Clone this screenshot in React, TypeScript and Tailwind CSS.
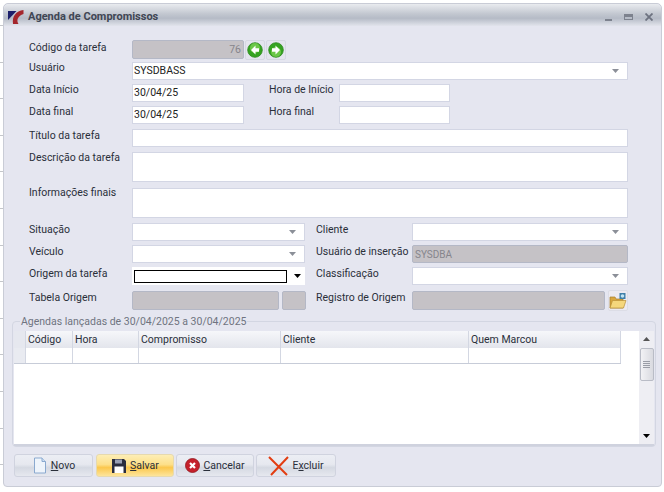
import React from 'react';

const Label = ({ children, className = '' }: { children: React.ReactNode; className?: string }) => (
  <span className={`text-[10.5px] leading-[14px] text-[#2a2f3a] whitespace-nowrap ${className}`}>{children}</span>
);

const Caret = ({ dark = false }: { dark?: boolean }) => (
  <svg width="7" height="4" viewBox="0 0 7 4" className="shrink-0">
    <path d="M0 0H7L3.500 4Z" fill={dark ? '#000' : '#8b8f98'} />
  </svg>
);

const Input = ({ value, className = '' }: { value?: string; className?: string }) => (
  <div className={`h-[18px] bg-white border border-[#d3d6e4] pl-[1px] text-[10.5px] leading-[18px] text-[#222] flex items-center ${className}`}>
    {value}
  </div>
);

const Select = ({ value, className = '' }: { value?: string; className?: string }) => (
  <div className={`h-[18px] bg-white border border-[#d3d6e4] pl-[1px] pr-2 text-[10.5px] text-[#222] flex items-center justify-between ${className}`}>
    <span>{value}</span>
    <Caret />
  </div>
);

const Disabled = ({ children, className = '' }: { children?: React.ReactNode; className?: string }) => (
  <div className={`h-[18px] bg-[#c5c2c6] border border-[#b4b8c6] rounded-[2px] text-[10.5px] text-[#85858c] flex items-center ${className}`}>
    {children}
  </div>
);

const ArrowButton = ({ flip = false }: { flip?: boolean }) => (
  <div className="w-[20px] h-[20px] bg-[#e4e5ee] border border-[#d6d8e3] rounded-[2px] flex items-center justify-center">
    <svg width="16" height="16" viewBox="0 0 16 16" className={flip ? 'rotate-180' : ''}>
      <circle cx="8" cy="8" r="7.300" fill="#35a321" stroke="#2e8a20" strokeWidth="0.800" />
      <circle cx="8" cy="6" r="5" fill="#8fe060" opacity="0.600" />
      <path d="M8.500 3.500L4 8L8.500 12.500V9.800H12V6.200H8.500Z" fill="#fff" />
    </svg>
  </div>
);

const Logo = () => (
  <svg width="16" height="16" viewBox="0 0 16 16" className="shrink-0">
    <path d="M0 2H8.500L0 11Z" fill="#1c1f6b" />
    <path d="M15.500 1C8 2 4 7 5 15H10.500C8 11 10 7 15.500 5Z" fill="#a4262c" />
  </svg>
);

const Folder = () => (
  <svg width="18" height="18" viewBox="0 0 18 18">
    <path d="M1 5H6L7 7H14V16H1Z" fill="#d9a63c" stroke="#a87f2b" strokeWidth="0.700" />
    <path d="M1 16L3.500 8.500H17L14.500 16Z" fill="#f5d77c" stroke="#b98f37" strokeWidth="0.700" />
    <rect x="10.500" y="1" width="6" height="6" fill="#3f7fa8" />
    <circle cx="13.500" cy="4" r="1.800" fill="#bfe3f2" />
  </svg>
);

const ActionButton = ({ icon, text, hot, active = false, width }: { icon: React.ReactNode; text: string; hot: number; active?: boolean; width: string }) => (
  <div className={`${width} h-[23px] rounded-[3px] border flex items-center justify-center gap-[3px] text-[10.5px] text-[#2a2f3a] ${active ? 'border-[#e6d9ae] bg-[linear-gradient(#fdeeb5,#fde08a_45%,#fbc74d_60%,#fde59c)]' : 'border-[#d0d3df] bg-[linear-gradient(#eceef4,#e6e8ef_45%,#d5d9e2_60%,#e6e8ef)]'}`}>
    {icon}
    <span>
      {text.slice(0, hot)}
      <span className="underline">{text[hot]}</span>
      {text.slice(hot + 1)}
    </span>
  </div>
);

const Th = ({ children, className }: { children?: React.ReactNode; className: string }) => (
  <div className={`h-full border-r border-[#d3d7e2] pl-[2px] flex items-center text-[10.5px] text-[#2a2f3a] ${className}`}>{children}</div>
);

const columns = ['w-[47px]', 'w-[66px]', 'w-[142px]', 'w-[188px]', 'w-[152px]'];
const titles = ['Código', 'Hora', 'Compromisso', 'Cliente', 'Quem Marcou'];

export default function App() {
  return (
    <div className="w-[664px] h-[492px] bg-white flex overflow-hidden" style={{ fontFamily: 'Roboto, sans-serif' }}>
      {/* desktop grid lines peeking out behind the window */}
      <div className="w-[3px] h-full bg-[repeating-linear-gradient(transparent_0,transparent_25px,#c4c6ca_25px,#c4c6ca_26px,transparent_26px,transparent_36.6px)]" />

      <div className="w-[659px] h-[484px] mt-[3px] bg-[#e5e6f0] border border-[#c9ccd6] rounded-t-[5px] rounded-b-[4px] flex flex-col">
        {/* title bar */}
        <div className="h-[22px] shrink-0 pt-[3px] rounded-t-[5px] bg-[linear-gradient(#e9ebef,#c2c7d0_45%,#b5bbc6_65%,#e2e4ec)] flex items-center pl-[4px] pr-[8px]">
          <Logo />
          <span className="ml-[4px] mt-[2px] text-[11px] font-bold text-[#3f4654] flex-1">Agenda de Compromissos</span>
          <div className="flex items-center gap-[12px] text-[#6d7280]">
            <div className="w-[7px] h-[2px] bg-[#7d828e] mt-[6px]" />
            <div className="w-[9px] h-[6px] border border-[#7d828e] border-t-[3px]" />
            <svg width="8" height="8" viewBox="0 0 8 8"><path d="M.5 .5L7.500 7.500M7.500 .5L.5 7.500" stroke="#6d7280" strokeWidth="1.800" /></svg>
          </div>
        </div>

        {/* form */}
        <div className="pl-[25px] pr-[33px] pt-[13px] flex flex-col">
          <div className="flex h-[21px] items-center">
            <Label className="w-[103px] -mt-[3px]">Código da tarefa</Label>
            <Disabled className="w-[112px] h-[19px] justify-end pr-[2px]">76</Disabled>
            <div className="w-[1px]" />
            <ArrowButton />
            <div className="w-[1px]" />
            <ArrowButton flip />
          </div>
          <div className="flex h-[17px] items-center mt-[2px]">
            <Label className="w-[103px] -mt-[5px]">Usuário</Label>
            <Select value="SYSDBASS" className="flex-1 h-[17px]" />
          </div>
          <div className="flex h-[18px] items-center mt-[5px]">
            <Label className="w-[103px] -mt-[7px]">Data Início</Label>
            <Input value="30/04/25" className="w-[112px]" />
            <Label className="w-[70px] ml-[25px] -mt-[7px]">Hora de Início</Label>
            <Input className="w-[111px]" />
          </div>
          <div className="flex h-[18px] items-center mt-[4px]">
            <Label className="w-[103px] -mt-[6px]">Data final</Label>
            <Input value="30/04/25" className="w-[112px]" />
            <Label className="w-[70px] ml-[25px] -mt-[6px]">Hora final</Label>
            <Input className="w-[111px]" />
          </div>
          <div className="flex h-[18px] items-center mt-[5px]">
            <Label className="w-[103px] -mt-[5px]">Título da tarefa</Label>
            <Input className="flex-1" />
          </div>
          <div className="flex h-[30px] mt-[5px]">
            <Label className="w-[103px] -mt-[1px]">Descrição da tarefa</Label>
            <Input className="flex-1 h-[30px]" />
          </div>
          <div className="flex h-[30px] mt-[6px]">
            <Label className="w-[103px] -mt-[2px]">Informações finais</Label>
            <Input className="flex-1 h-[30px]" />
          </div>

          <div className="flex h-[18px] items-center mt-[5px]">
            <Label className="w-[103px] -mt-[5px]">Situação</Label>
            <Select className="w-[173px]" />
            <Label className="w-[96px] ml-[11px] -mt-[5px]">Cliente</Label>
            <Select className="flex-1" />
          </div>
          <div className="flex h-[18px] items-center mt-[4px]">
            <Label className="w-[103px] -mt-[5px]">Veículo</Label>
            <Select className="w-[173px]" />
            <Label className="w-[96px] ml-[11px] -mt-[5px]">Usuário de inserção</Label>
            <Disabled className="flex-1 pl-[2px] text-[10px]">SYSDBA</Disabled>
          </div>
          <div className="flex h-[18px] items-center mt-[4px]">
            <Label className="w-[103px] -mt-[5px]">Origem da tarefa</Label>
            <div className="w-[173px] h-[18px] bg-white flex items-center pl-[2px] pr-[4px] gap-[7px]">
              <div className="flex-1 h-[13px] border border-black" />
              <Caret dark />
            </div>
            <Label className="w-[96px] ml-[11px] -mt-[5px]">Classificação</Label>
            <Select className="flex-1" />
          </div>
          <div className="flex h-[19px] items-center mt-[6px]">
            <Label className="w-[103px] -mt-[5px]">Tabela Origem</Label>
            <Disabled className="w-[147px] h-[19px]" />
            <Disabled className="w-[24px] h-[19px] ml-[3px]" />
            <Label className="w-[96px] ml-[10px] -mt-[5px]">Registro de Origem</Label>
            <Disabled className="flex-1 h-[19px]" />
            <div className="w-[20px] h-[21px] ml-[3px] bg-[#eceaf0] border border-[#dcdde6] rounded-[2px] flex items-center justify-center"><Folder /></div>
          </div>
        </div>

        {/* agendas grid */}
        <fieldset className="ml-[8px] mr-[5px] mt-[5px] h-[132px] border border-[#d3d6e2] rounded-[4px] px-[1px] pb-[1px] pt-[3px] min-w-0">
          <legend className="ml-[6px] px-[1px] text-[10.5px] leading-[13px] text-[#6f7480] whitespace-nowrap">Agendas lançadas de 30/04/2025 a 30/04/2025</legend>
          <div className="h-[115px] bg-white border-b-2 border-[#cfd2de] flex">
            <div className="flex-1">
              <div className="flex h-[17px] w-[607px] bg-[linear-gradient(#f6f7fa,#e3e5ec)]">
                <div className="w-[12px] h-full border-r border-[#d3d7e2] bg-[#e6e8ef]" />
                {columns.map((w, i) => (
                  <Th key={titles[i]} className={w}>{titles[i]}</Th>
                ))}
              </div>
              <div className="flex h-[16px] w-[607px] border-b border-[#c7ccd8]">
                <div className="w-[12px] h-full border-r border-[#d3d7e2] bg-[#e9ebf1]" />
                {columns.map((w, i) => (
                  <Th key={titles[i]} className={w} />
                ))}
              </div>
            </div>
            <div className="w-[15px] bg-[#eeeef3] flex flex-col items-center pt-[6px]">
              <svg width="7" height="4" viewBox="0 0 7 4" className="shrink-0"><path d="M0 4H7L3.500 0Z" fill="#555" /></svg>
              <div className="w-[14px] h-[33px] mt-[7px] rounded-[2px] border border-[#b9bcc6] bg-[linear-gradient(90deg,#f2f2f5,#d9dae0)] flex flex-col items-center justify-center gap-[1px]">
                <div className="w-[7px] h-[1px] bg-[#9a9da6]" />
                <div className="w-[7px] h-[1px] bg-[#9a9da6]" />
                <div className="w-[7px] h-[1px] bg-[#9a9da6]" />
                <div className="w-[7px] h-[1px] bg-[#9a9da6]" />
              </div>
              <div className="flex-1" />
              <div className="mb-[6px]"><Caret dark /></div>
            </div>
          </div>
        </fieldset>

        {/* actions */}
        <div className="flex gap-[2px] pl-[10px] mt-[7px]">
          <ActionButton
            width="w-[79px] mr-[1px]"
            text="Novo"
            hot={0}
            icon={
              <svg width="16" height="17" viewBox="0 0 16 17">
                <path d="M2.500 1H10L13.500 4.500V16H2.500Z" fill="#eef4fb" stroke="#8aa9cf" />
                <path d="M10 1V4.500H13.500" fill="#cfe0f2" stroke="#8aa9cf" />
              </svg>
            }
          />
          <ActionButton
            width="w-[78px]"
            active
            text="Salvar"
            hot={0}
            icon={
              <svg width="16" height="16" viewBox="0 0 16 16">
                <path d="M1 1H13L15 3V15H1Z" fill="#2a2d3e" />
                <rect x="4" y="1.500" width="7" height="4" fill="#9aa0b4" />
                <rect x="3.500" y="8.500" width="9" height="6.500" fill="#fff" />
              </svg>
            }
          />
          <ActionButton
            width="w-[78px]"
            text="Cancelar"
            hot={0}
            icon={
              <svg width="15" height="15" viewBox="0 0 15 15">
                <circle cx="7.500" cy="7.500" r="7" fill="#c5202b" stroke="#931820" strokeWidth="0.800" />
                <path d="M5 5L10 10M10 5L5 10" stroke="#fff" strokeWidth="2.200" />
              </svg>
            }
          />
          <ActionButton
            width="w-[80px]"
            text="Excluir"
            hot={1}
            icon={
              <svg width="21" height="20" viewBox="0 0 21 20">
                <path d="M1 1L19 19M20 1L3 19" stroke="#e23d12" strokeWidth="2" fill="none" />
              </svg>
            }
          />
        </div>
      </div>
    </div>
  );
}
